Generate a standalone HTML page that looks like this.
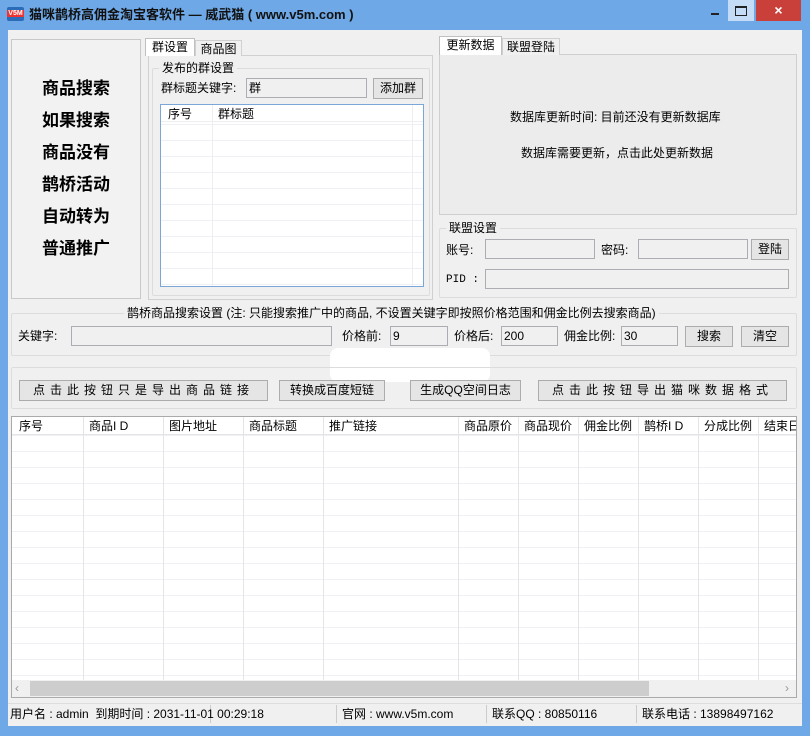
<!DOCTYPE html>
<html><head><meta charset="utf-8"><style>
*{box-sizing:border-box;margin:0;padding:0}
body{width:810px;height:736px;background:#6ea8e6;position:relative;overflow:hidden;font-family:"Liberation Sans","Noto Sans CJK SC",sans-serif;font-size:12px;color:#000}
.a{position:absolute}
.client{left:8px;top:30px;width:794px;height:696px;background:#f0f0f0}
.inp{position:absolute;background:#f0f0f0;border:1px solid #abadb3;height:20px;font-size:12px;padding:2px 2px;line-height:14px}
.btn{position:absolute;background:#e5e5e5;border:1px solid #acacac;height:21px;text-align:center;line-height:19px;font-size:12px}
.grp{position:absolute;border:1px solid #dcdcdc;border-radius:2px}
.gl{position:absolute;background:#f0f0f0;padding:0 3px;line-height:14px;top:-8px;left:6px}
.t{position:absolute;white-space:nowrap;line-height:14px}
.tab{position:absolute;border:1px solid #d0d0d0;border-bottom:none;background:#f0f0f0;text-align:center;line-height:16px}
.big{position:absolute;left:42px;font-size:17px;font-weight:bold;line-height:20px;letter-spacing:0px}
</style></head><body>
<!-- title -->
<div class="a" style="left:7px;top:7px;width:17px;height:14px;background:#2b6cb8;border-radius:2px;color:#fff;font-size:7px;font-weight:bold;line-height:14px;text-align:center"><span style="background:#e33;padding:0 1px">V5M</span></div>
<div class="t" style="left:29px;top:8px;font-size:13px;font-weight:bold;color:#111">猫咪鹊桥高佣金淘宝客软件 — 威武猫 ( www.v5m.com )</div>
<div class="a" style="left:711px;top:13px;width:8px;height:2px;background:#222"></div>
<div class="a" style="left:728px;top:0;width:26px;height:21px;background:#c5dcf6"></div>
<div class="a" style="left:735px;top:6px;width:12px;height:10px;border:1px solid #222;border-top-width:2px"></div>
<div class="a" style="left:756px;top:0;width:45px;height:21px;background:#c9403a;color:#fff;text-align:center;font-size:14px;line-height:20px;font-weight:bold">×</div>

<div class="a client"></div>
<!-- left panel -->
<div class="a" style="left:11px;top:39px;width:130px;height:260px;border:1px solid #c8c8c8;background:#f2f2f2"></div>
<div class="big" style="top:79px">商品搜索</div>
<div class="big" style="top:111px">如果搜索</div>
<div class="big" style="top:143px">商品没有</div>
<div class="big" style="top:175px">鹊桥活动</div>
<div class="big" style="top:207px">自动转为</div>
<div class="big" style="top:239px">普通推广</div>

<!-- middle tabs -->
<div class="a" style="left:148px;top:55px;width:285px;height:245px;border:1px solid #d0d0d0;background:#f0f0f0"></div>
<div class="tab" style="left:145px;top:38px;width:50px;height:18px;background:#fff;z-index:2;border-color:#c0c0c0">群设置</div>
<div class="tab" style="left:195px;top:40px;width:47px;height:16px">商品图</div>
<div class="grp" style="left:152px;top:68px;width:278px;height:228px"><div class="gl">发布的群设置</div></div>
<div class="t" style="left:161px;top:81px">群标题关键字:</div>
<div class="inp" style="left:246px;top:78px;width:121px">群</div>
<div class="btn" style="left:373px;top:78px;width:50px">添加群</div>
<div class="a" style="left:160px;top:104px;width:264px;height:183px;border:1px solid #7aa7d8;background:#fff;
background-image:repeating-linear-gradient(to bottom,transparent 0,transparent 15px,#eef0f3 15px,#eef0f3 16px);background-position:0 4px"></div>
<div class="a" style="left:161px;top:105px;width:262px;height:17px;background:#fff;border-bottom:1px solid #eee"></div>
<div class="a" style="left:212px;top:105px;width:1px;height:181px;background:#eceef1"></div>
<div class="a" style="left:412px;top:105px;width:1px;height:181px;background:#eceef1"></div>
<div class="t" style="left:168px;top:107px">序号</div>
<div class="t" style="left:218px;top:107px">群标题</div>

<!-- right tabs -->
<div class="a" style="left:439px;top:54px;width:358px;height:161px;border:1px solid #cfcfcf;background:#ececec"></div>
<div class="tab" style="left:439px;top:36px;width:63px;height:19px;background:#fff;border-color:#c0c0c0;z-index:2">更新数据</div>
<div class="tab" style="left:502px;top:38px;width:58px;height:17px">联盟登陆</div>
<div class="t" style="left:510px;top:110px">数据库更新时间: 目前还没有更新数据库</div>
<div class="t" style="left:521px;top:146px">数据库需要更新，点击此处更新数据</div>
<div class="grp" style="left:439px;top:228px;width:358px;height:70px"><div class="gl">联盟设置</div></div>
<div class="t" style="left:446px;top:243px">账号:</div>
<div class="inp" style="left:485px;top:239px;width:110px"></div>
<div class="t" style="left:601px;top:243px">密码:</div>
<div class="inp" style="left:638px;top:239px;width:110px"></div>
<div class="btn" style="left:751px;top:239px;width:38px">登陆</div>
<div class="t" style="left:446px;top:273px;font-family:'Liberation Mono',monospace;font-size:11px">PID :</div>
<div class="inp" style="left:485px;top:269px;width:304px"></div>

<!-- search group -->
<div class="grp" style="left:11px;top:313px;width:786px;height:43px"></div>
<div class="t" style="left:124px;top:306px;background:#f0f0f0;padding:0 3px">鹊桥商品搜索设置 (注: 只能搜索推广中的商品, 不设置关键字即按照价格范围和佣金比例去搜索商品)</div>
<div class="t" style="left:18px;top:329px">关键字:</div>
<div class="inp" style="left:71px;top:326px;width:261px"></div>
<div class="t" style="left:342px;top:329px">价格前:</div>
<div class="inp" style="left:390px;top:326px;width:58px">9</div>
<div class="t" style="left:454px;top:329px">价格后:</div>
<div class="inp" style="left:501px;top:326px;width:57px">200</div>
<div class="t" style="left:564px;top:329px">佣金比例:</div>
<div class="inp" style="left:621px;top:326px;width:57px">30</div>
<div class="btn" style="left:685px;top:326px;width:48px">搜索</div>
<div class="btn" style="left:741px;top:326px;width:48px">清空</div>
<div class="a" style="left:330px;top:348px;width:160px;height:34px;background:#fff;border-radius:8px"></div>

<div class="grp" style="left:11px;top:367px;width:786px;height:42px"></div>
<div class="btn" style="left:19px;top:380px;width:249px;letter-spacing:5px">点击此按钮只是导出商品链接</div>
<div class="btn" style="left:279px;top:380px;width:106px">转换成百度短链</div>
<div class="btn" style="left:410px;top:380px;width:111px">生成QQ空间日志</div>
<div class="btn" style="left:538px;top:380px;width:249px;letter-spacing:5px">点击此按钮导出猫咪数据格式</div>

<!-- table -->
<div class="a" style="left:11px;top:416px;width:786px;height:282px;border:1px solid #aaa;background:#fff;
background-image:repeating-linear-gradient(to bottom,transparent 0,transparent 15px,#eef0f3 15px,#eef0f3 16px);background-position:0 3px"></div>
<div class="a" style="left:12px;top:417px;width:784px;height:18px;background:#fff;border-bottom:1px solid #e5e5e5"></div>
<div class="a" style="left:12px;top:417px;width:784px;height:263px;background:
linear-gradient(#e5e5e5,#e5e5e5) 71px 0/1px 100% no-repeat,
linear-gradient(#e5e5e5,#e5e5e5) 151px 0/1px 100% no-repeat,
linear-gradient(#e5e5e5,#e5e5e5) 231px 0/1px 100% no-repeat,
linear-gradient(#e5e5e5,#e5e5e5) 311px 0/1px 100% no-repeat,
linear-gradient(#e5e5e5,#e5e5e5) 446px 0/1px 100% no-repeat,
linear-gradient(#e5e5e5,#e5e5e5) 506px 0/1px 100% no-repeat,
linear-gradient(#e5e5e5,#e5e5e5) 566px 0/1px 100% no-repeat,
linear-gradient(#e5e5e5,#e5e5e5) 626px 0/1px 100% no-repeat,
linear-gradient(#e5e5e5,#e5e5e5) 686px 0/1px 100% no-repeat,
linear-gradient(#e5e5e5,#e5e5e5) 746px 0/1px 100% no-repeat"></div>
<div class="t" style="left:19px;top:419px">序号</div>
<div class="t" style="left:89px;top:419px">商品I D</div>
<div class="t" style="left:169px;top:419px">图片地址</div>
<div class="t" style="left:249px;top:419px">商品标题</div>
<div class="t" style="left:329px;top:419px">推广链接</div>
<div class="t" style="left:464px;top:419px">商品原价</div>
<div class="t" style="left:524px;top:419px">商品现价</div>
<div class="t" style="left:584px;top:419px">佣金比例</div>
<div class="t" style="left:644px;top:419px">鹊桥I D</div>
<div class="t" style="left:704px;top:419px">分成比例</div>
<div class="t" style="left:764px;top:419px;width:32px;overflow:hidden">结束日</div>
<div class="a" style="left:12px;top:680px;width:784px;height:17px;background:#f0f0f0"></div>
<div class="a" style="left:30px;top:681px;width:619px;height:15px;background:#cdcdcd"></div>
<div class="t" style="left:15px;top:681px;color:#999">‹</div>
<div class="t" style="left:785px;top:681px;color:#999">›</div>

<!-- status -->
<div class="a" style="left:8px;top:703px;width:794px;height:22px;background:#f0f0f0;border-top:1px solid #ddd"></div>
<div class="a" style="left:210px;top:705px;width:1px;height:18px;background:#ccc"></div>
<div class="a" style="left:336px;top:705px;width:1px;height:18px;background:#ccc"></div>
<div class="a" style="left:486px;top:705px;width:1px;height:18px;background:#ccc"></div>
<div class="a" style="left:636px;top:705px;width:1px;height:18px;background:#ccc"></div>
<div class="t" style="left:10px;top:707px;font-size:12px">用户名 : admin&nbsp; 到期时间 : 2031-11-01 00:29:18</div>
<div class="t" style="left:342px;top:707px">官网 : www.v5m.com</div>
<div class="t" style="left:492px;top:707px">联系QQ : 80850116</div>
<div class="t" style="left:642px;top:707px">联系电话 : 13898497162</div>
</body></html>
